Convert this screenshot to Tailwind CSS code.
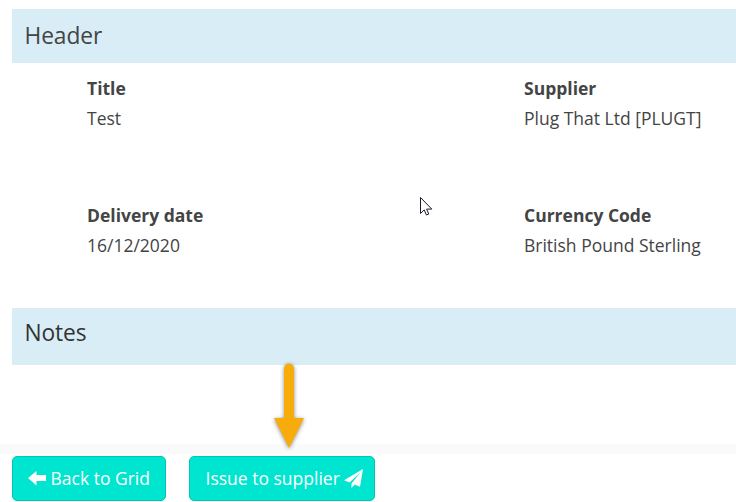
<!DOCTYPE html>
<html lang="en">
<head>
    <meta charset="UTF-8">
    <meta name="viewport" content="width=device-width, initial-scale=1.0">
    <title>Order</title>
    <script src="https://cdn.jsdelivr.net/npm/@tailwindcss/browser@4"></script>
</head>
<body class="bg-white font-['Open_Sans',sans-serif] text-[#444] overflow-hidden">
    <main class="relative h-[502px] flex flex-col pt-[9px]">
        <section class="h-[299px]">
            <h2 class="ml-3 h-[54px] pl-[12.5px] bg-[#d9edf6] text-[22.75px] leading-[53px] tracking-[-0.1px]">Header</h2>
            <dl class="grid grid-cols-[437px_1fr] pl-[87px] pt-[10px] text-[17.5px] leading-[30px] whitespace-nowrap">
                <div class="h-[127px]">
                    <dt class="font-bold">Title</dt>
                    <dd>Test</dd>
                </div>
                <div class="h-[127px]">
                    <dt class="font-bold">Supplier</dt>
                    <dd>Plug That Ltd [PLUGT]</dd>
                </div>
                <div>
                    <dt class="font-bold">Delivery date</dt>
                    <dd>16/12/2020</dd>
                </div>
                <div>
                    <dt class="font-bold">Currency Code</dt>
                    <dd>British Pound Sterling</dd>
                </div>
            </dl>
        </section>

        <section class="h-[136px]">
            <h2 class="ml-3 h-[57px] pl-[12.5px] bg-[#d9edf6] text-[#333] text-[22.75px] leading-[49px] tracking-[-0.1px]">Notes</h2>
        </section>

        <footer class="border-t-[10px] border-[#fafafa] pt-[2px] pl-3 flex gap-[23px] text-white text-[17.5px]">
            <button class="w-[154px] h-[45px] pl-[15px] flex items-center gap-[4.5px] rounded-[5px] border border-[#00c8b4] bg-[#00e5cf] whitespace-nowrap">
                <svg class="w-[18px] h-[15px] shrink-0" viewBox="0 0 18 15" fill="currentColor"><path d="M0 7 8.500 0v4H18v6H8.500v4.500z"/></svg>
                <span>Back to Grid</span>
            </button>
            <button class="w-[186px] h-[45px] pl-[15.5px] flex items-center gap-[4px] rounded-[5px] border border-[#00c8b4] bg-[#00e5cf] whitespace-nowrap">
                <span>Issue to supplier</span>
                <svg class="w-[19px] h-[19px] shrink-0" viewBox="0 0 19 19" fill="currentColor"><path d="M19 0 16 17.800 10.800 15.600 7.500 19V14.600L16.300 3.600 5.500 13.600 0 11.300z"/></svg>
            </button>
        </footer>

        <!-- callout arrow -->
        <svg class="absolute left-[264px] top-[354px] w-[50px] h-[102px] drop-shadow-[0_1px_2px_rgba(0,0,0,0.45)]" viewBox="0 0 50 102" fill="#f8ac0b"><path d="M20 64V14.500a5 5 0 0 1 10 0V64h10L25 94 10 64z"/></svg>

        <!-- mouse pointer -->
        <svg class="absolute left-[420px] top-[196px] w-[13px] h-[21px]" viewBox="0 0 13 21" fill="white" stroke="#1b1b2b" stroke-width="1"><path d="M.5 1.500v16l3.700-3.600 2.200 5.100 2.400-1-2.200-4.900h5.200z"/></svg>
    </main>
</body>
</html>
